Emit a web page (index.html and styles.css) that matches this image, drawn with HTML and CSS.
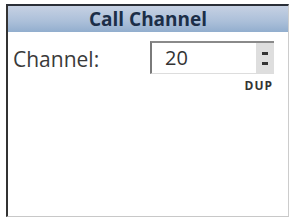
FILE: index.html
```html
<!DOCTYPE html>
<html>
<head>
    <meta charset="utf-8" />
    <title>Call Channel</title>
    <link rel="stylesheet" href="styles.css">
</head>
<body>
    <div class="panel">
        <div class="titulo">Call Channel</div>

        <div class="fila">
            <label>Channel:</label>
            <div class="caja">
                <span class="valor">20</span>
                <span class="flechas"><i></i><i></i></span>
            </div>
        </div>

        <div class="dup">DUP</div>
    </div>
</body>
</html>
```

FILE: styles.css
```css
body {
    margin: 0;
    background-color: #ffffff;
    font-family: "Open Sans", sans-serif;
}
.panel {
    box-sizing: border-box;
    margin: 4px 0 0 6px;
    width: 283px;
    height: 213px;
    border-top: 2px solid #2a2f38;
    border-left: 2px solid #333333;
    border-right: 1px solid #cccccc;
    border-bottom: 1px solid #c8c8c8;
}
.titulo {
    height: 26px;
    line-height: 26px;
    text-align: center;
    font-weight: bold;
    font-size: 19px;
    color: #1c2e48;
    background: linear-gradient(#c6d1e3, #abbfd9 60%, #92aece);
}
.fila {
    display: flex;
    align-items: center;
    margin-top: 9px;
}
label {
    width: 137px;
    padding-left: 5px;
    padding-top: 2px;
    font-size: 21px;
    color: #3a3a3a;
}
.caja {
    box-sizing: border-box;
    display: flex;
    width: 124px;
    height: 33px;
    border-top: 2px solid #8a8a8a;
    border-left: 2px solid #7a7a7a;
    border-bottom: 1px solid #dddddd;
}
.valor {
    flex: 1;
    padding-left: 13px;
    font-size: 20px;
    line-height: 30px;
    color: #333333;
}
.flechas {
    display: flex;
    flex-direction: column;
    justify-content: center;
    align-items: center;
    gap: 7px;
    width: 18px;
    background-color: #dedede;
}
.flechas i {
    display: block;
    width: 6px;
    height: 3px;
    background-color: #333333;
}
.dup {
    margin-top: 3px;
    width: 265px;
    text-align: right;
    font-size: 12px;
    font-weight: bold;
    letter-spacing: 1px;
    color: #333333;
}
```
